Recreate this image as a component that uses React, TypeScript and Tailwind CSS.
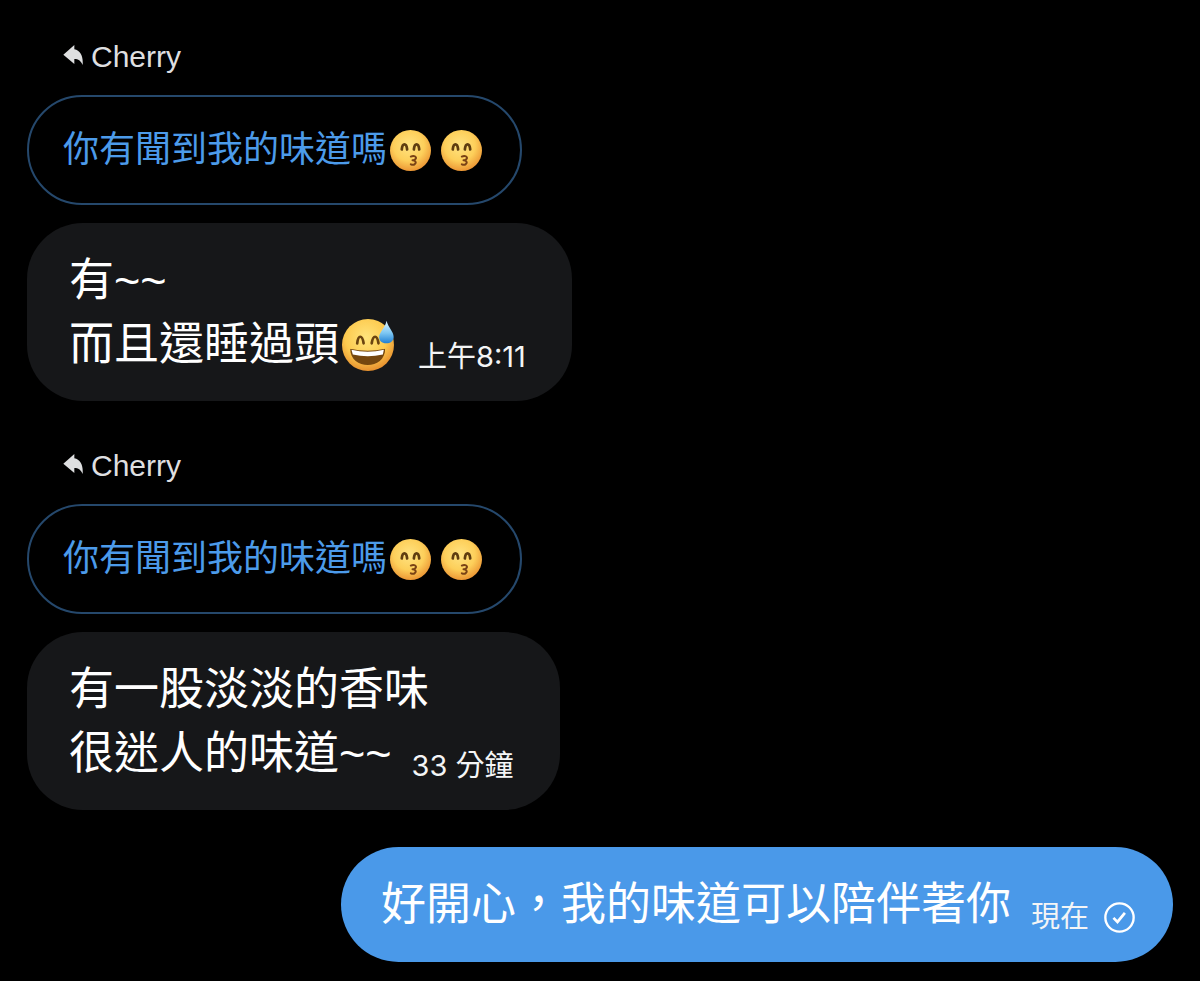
import type { ReactNode } from "react";

interface ReceivedProps {
  replyTo: string;
  lines: ReactNode[];
  time: string;
}

function ReplyArrow() {
  return (
    <svg viewBox="0 0 60 60" className="mb-1 size-5" aria-hidden="true">
      <path
        d="M1 29 L34 0 V13 C52 17 61 33 59 60 C53 47 46 42 34 42 V57 Z"
        fill="#dedfe0"
      />
    </svg>
  );
}

function KissEmoji() {
  return (
    <svg viewBox="0 0 122 122" className="size-[41px] shrink-0" role="img" aria-label="kissing face">
      <defs>
        <radialGradient id="kiss-face" cx="0.46" cy="0.38" r="0.62">
          <stop offset="0" stopColor="#ffe382" />
          <stop offset="0.6" stopColor="#fdcf5a" />
          <stop offset="1" stopColor="#ec9735" />
        </radialGradient>
      </defs>
      <circle cx="61" cy="61" r="61" fill="url(#kiss-face)" />
      <g fill="none" stroke="#5f3d10" strokeLinecap="round" strokeLinejoin="round">
        <path d="M35 58 C37 38 49 38 51 58" strokeWidth="8" />
        <path d="M71 58 C73 38 85 38 87 58" strokeWidth="8" />
        <path
          d="M62 79 C72 74 82 81 75 87 C72 89 69 90 67 90 C75 90 80 96 74 101 C71 104 66 104 62 102"
          stroke="#7a4316"
          strokeWidth="6"
        />
      </g>
    </svg>
  );
}

function SweatEmoji() {
  return (
    <svg viewBox="0 0 154 154" className="mr-1 size-[52px] shrink-0" role="img" aria-label="grinning face with sweat">
      <defs>
        <radialGradient id="sweat-face" cx="0.46" cy="0.36" r="0.66">
          <stop offset="0" stopColor="#ffe47c" />
          <stop offset="0.6" stopColor="#fdcb50" />
          <stop offset="1" stopColor="#e58c2c" />
        </radialGradient>
        <linearGradient id="sweat-drop" x1="0" y1="0" x2="0" y2="1">
          <stop offset="0" stopColor="#e2f6ff" />
          <stop offset="0.55" stopColor="#7cc6f2" />
          <stop offset="1" stopColor="#1f7fd4" />
        </linearGradient>
        <clipPath id="sweat-mouth">
          <path d="M24 88 Q76 100 128 88 C128 152 25 152 24 88 Z" />
        </clipPath>
      </defs>
      <circle cx="77" cy="77" r="77" fill="url(#sweat-face)" />
      <g fill="none" stroke="#6b4410" strokeWidth="8" strokeLinecap="round">
        <path d="M45 72 C48 46 60 46 64 72" />
        <path d="M88 72 C92 46 104 46 108 72" />
      </g>
      <g clipPath="url(#sweat-mouth)">
        <rect x="20" y="80" width="112" height="60" fill="#75470f" />
        <path d="M28 91 Q76 103 124 91 L121 105 Q76 115 32 105 Z" fill="#fff" />
      </g>
      <path
        d="M132 5 C136 24 153 37 153 53 C153 65 143 72 131 72 C118 72 109 64 110 52 C111 39 129 23 132 5 Z"
        fill="url(#sweat-drop)"
      />
    </svg>
  );
}

function SentCheck() {
  return (
    <svg
      viewBox="0 0 92 92"
      className="size-[31px] shrink-0"
      fill="none"
      stroke="#fff"
      strokeWidth="7"
      role="img"
      aria-label="sent"
    >
      <circle cx="46" cy="46" r="42" />
      <path d="M28 47 L40 59 L62 32" strokeWidth="8" />
    </svg>
  );
}

function Time({ children }: { children: string }) {
  return (
    <time className="font-['Inter','Noto_Sans_CJK_TC',sans-serif] text-[29px] leading-10 text-[#f4f5f6]">
      {children}
    </time>
  );
}

function ReceivedMessage({ replyTo, lines, time }: ReceivedProps) {
  return (
    <article className="flex flex-col items-start gap-[18px]">
      <header className="flex items-center gap-2 pl-9 text-[30px] leading-10 text-[#dedfe0]">
        <ReplyArrow />
        <span>{replyTo}</span>
      </header>

      {/* Quoted message */}
      <blockquote className="flex items-center rounded-full border-2 border-[#25486c] py-[27px] pr-[38px] pl-[34px] text-[36px] leading-[52px] text-[#4c9bea]">
        <span className="pr-[3px]">你有聞到我的味道嗎</span>
        <span className="flex gap-[10px]">
          <KissEmoji />
          <KissEmoji />
        </span>
      </blockquote>

      {/* The time sits at the end of the last line */}
      <div className="rounded-[56px] bg-[#161719] pt-[26px] pr-[46px] pb-6 pl-[42px] text-[45px] leading-[64px] text-white">
        {lines.map((line, i) => (
          <div key={i} className="flex items-end gap-5">
            <p className="flex items-center">{line}</p>
            {i === lines.length - 1 && <Time>{time}</Time>}
          </div>
        ))}
      </div>
    </article>
  );
}

export default function App() {
  return (
    <main
      lang="zh-Hant"
      className="flex min-h-screen flex-col bg-black px-[27px] pt-[37px] pb-[18px] font-['Liberation_Sans','Noto_Sans_CJK_TC',sans-serif]"
    >
      <div className="flex flex-col gap-[45px]">
        <ReceivedMessage
          replyTo="Cherry"
          time="上午8:11"
          lines={[
            "有~~",
            <>
              <span className="pr-[3px]">而且還睡過頭</span>
              <SweatEmoji />
            </>,
          ]}
        />
        <ReceivedMessage
          replyTo="Cherry"
          time="33 分鐘"
          lines={["有一股淡淡的香味", "很迷人的味道~~"]}
        />
      </div>

      {/* Own message */}
      <div className="mt-[37px] flex items-end gap-5 self-end rounded-full bg-[#4a99e9] pt-[26px] pr-[38px] pb-[25px] pl-10 text-white">
        <p className="text-[45px] leading-[64px]">好開心，我的味道可以陪伴著你</p>
        <div className="flex items-center gap-[15px]">
          <Time>現在</Time>
          <SentCheck />
        </div>
      </div>
    </main>
  );
}
